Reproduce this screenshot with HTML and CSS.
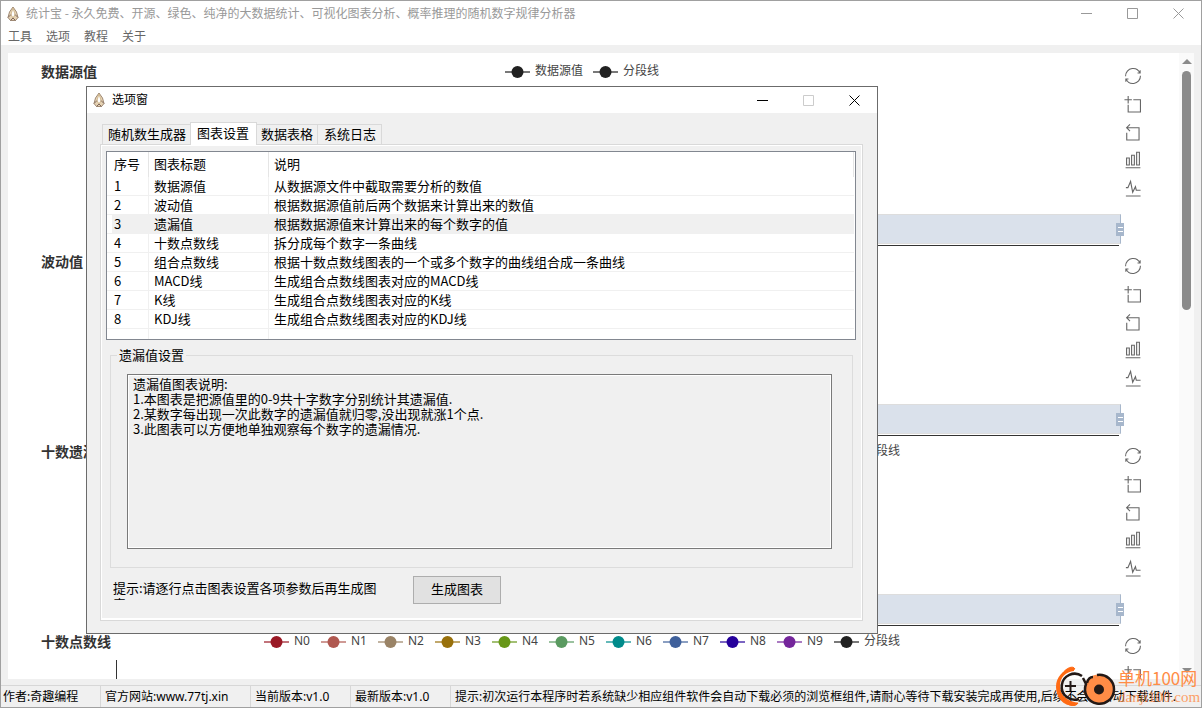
FILE: index.html
```html
<!DOCTYPE html>
<html lang="zh-CN">
<head>
<meta charset="utf-8">
<title>统计宝</title>
<link rel="stylesheet" href="styles.css">
</head>
<body>
<svg class="defs" aria-hidden="true">
  <symbol id="logo" viewBox="0 0 12 16">
    <path d="M6 1L2.500 6L1 11.500L3.500 14.500H8.500L11 11.500L9.500 6Z" fill="#e6d3b4" stroke="#a08a74" stroke-width="1"/>
    <path d="M6 2L4 8.500L6 12L8 8.500Z" fill="#fff" stroke="#c9ad80" stroke-width=".8"/>
    <path d="M1 11.500L4 8.500M11 11.500L8 8.500M3.500 14.500L6 12L8.500 14.500" fill="none" stroke="#7d655c" stroke-width="1"/>
  </symbol>
  <symbol id="restore" viewBox="0 0 60 60"><path d="M47,18.900h9.800V8.700M56.300,20.100C52.100,9,40.500,0.600,26.800,2.100C12.600,3.700,1.600,16.200,2.100,30.600M13,41.100H3.100v10.200M3.700,39.900c4.200,11.100,15.800,19.500,29.500,18c14.200-1.600,25.200-14.100,24.700-28.500"/></symbol>
  <symbol id="zoom" viewBox="2 0 58 58"><path d="M0,13.500h26.900M13.500,26.900V0M32.100,13.500H58V58H13.500V32.100"/></symbol>
  <symbol id="back" viewBox="4 0 58 58"><path d="M22,1.400L9.900,13.500l12.300,12.300M10.300,13.500H54.900v44.600H10.300v-26"/></symbol>
  <symbol id="bar" viewBox="1 1 58 58"><path d="M6.700,22.900h10V48h-10V22.900zM24.900,13h10v35h-10V13zM43.200,2h10v46h-10V2zM3.100,58h53.700"/></symbol>
  <symbol id="line" viewBox="1 2 56 56"><path d="M4.100,28.900h7.100l9.300-22l7.400,38l9.700-19.700l3,12.800h14.900M4.100,58h51.400"/></symbol>
  <symbol id="key" viewBox="0 0 25 14"><path d="M0 7H25" stroke="currentColor" stroke-width="2" opacity=".6"/><circle cx="12.500" cy="7" r="6" fill="currentColor"/></symbol>
  <symbol id="min" viewBox="0 0 11 11"><path d="M0 5.500H11" fill="none" stroke="currentColor"/></symbol>
  <symbol id="max" viewBox="0 0 11 11"><path d="M.5 .5H10.500V10.500H.5Z" fill="none" stroke="currentColor"/></symbol>
  <symbol id="close" viewBox="0 0 11 11"><path d="M.5 .5L10.500 10.500M10.500 .5L.5 10.500" fill="none" stroke="currentColor"/></symbol>
</svg>

<div class="window">
  <header class="titlebar main-title">
    <svg class="logo"><use href="#logo"/></svg>
    <h1 class="caption">统计宝 - 永久免费、开源、绿色、纯净的大数据统计、可视化图表分析、概率推理的随机数字规律分析器</h1>
    <div class="controls">
      <button type="button" aria-label="最小化"><svg><use href="#min"/></svg></button>
      <button type="button" aria-label="最大化"><svg><use href="#max"/></svg></button>
      <button type="button" aria-label="关闭"><svg><use href="#close"/></svg></button>
    </div>
  </header>
  <nav class="menubar">
    <button type="button">工具</button>
    <button type="button">选项</button>
    <button type="button">教程</button>
    <button type="button">关于</button>
  </nav>

  <main class="workspace">
    <div class="charts">
      <section class="chart">
        <div class="chart-head">
          <h2>数据源值</h2>
          <ul class="legend">
            <li class="ink"><svg><use href="#key"/></svg><span>数据源值</span></li>
            <li class="ink"><svg><use href="#key"/></svg><span>分段线</span></li>
          </ul>
        </div>
        <div class="plot"><div class="slider"><i class="grip"></i></div></div>
        <div class="toolbox">
          <button type="button" aria-label="还原"><svg><use href="#restore"/></svg></button>
          <button type="button" aria-label="区域缩放"><svg><use href="#zoom"/></svg></button>
          <button type="button" aria-label="缩放还原"><svg><use href="#back"/></svg></button>
          <button type="button" aria-label="柱状图"><svg><use href="#bar"/></svg></button>
          <button type="button" aria-label="折线图"><svg><use href="#line"/></svg></button>
        </div>
      </section>
      <section class="chart">
        <div class="chart-head">
          <h2>波动值</h2>
        </div>
        <div class="plot"><div class="slider"><i class="grip"></i></div></div>
        <div class="toolbox">
          <button type="button" aria-label="还原"><svg><use href="#restore"/></svg></button>
          <button type="button" aria-label="区域缩放"><svg><use href="#zoom"/></svg></button>
          <button type="button" aria-label="缩放还原"><svg><use href="#back"/></svg></button>
          <button type="button" aria-label="柱状图"><svg><use href="#bar"/></svg></button>
          <button type="button" aria-label="折线图"><svg><use href="#line"/></svg></button>
        </div>
      </section>
      <section class="chart">
        <div class="chart-head">
          <h2>十数遗漏</h2>
          <ul class="legend">
            <li class="n0"><svg><use href="#key"/></svg><span>N0</span></li>
            <li class="n1"><svg><use href="#key"/></svg><span>N1</span></li>
            <li class="n2"><svg><use href="#key"/></svg><span>N2</span></li>
            <li class="n3"><svg><use href="#key"/></svg><span>N3</span></li>
            <li class="n4"><svg><use href="#key"/></svg><span>N4</span></li>
            <li class="n5"><svg><use href="#key"/></svg><span>N5</span></li>
            <li class="n6"><svg><use href="#key"/></svg><span>N6</span></li>
            <li class="n7"><svg><use href="#key"/></svg><span>N7</span></li>
            <li class="n8"><svg><use href="#key"/></svg><span>N8</span></li>
            <li class="n9"><svg><use href="#key"/></svg><span>N9</span></li>
            <li class="ink"><svg><use href="#key"/></svg><span>分段线</span></li>
          </ul>
        </div>
        <div class="plot"><div class="slider"><i class="grip"></i></div></div>
        <div class="toolbox">
          <button type="button" aria-label="还原"><svg><use href="#restore"/></svg></button>
          <button type="button" aria-label="区域缩放"><svg><use href="#zoom"/></svg></button>
          <button type="button" aria-label="缩放还原"><svg><use href="#back"/></svg></button>
          <button type="button" aria-label="柱状图"><svg><use href="#bar"/></svg></button>
          <button type="button" aria-label="折线图"><svg><use href="#line"/></svg></button>
        </div>
      </section>
      <section class="chart">
        <div class="chart-head">
          <h2>十数点数线</h2>
          <ul class="legend">
            <li class="n0"><svg><use href="#key"/></svg><span>N0</span></li>
            <li class="n1"><svg><use href="#key"/></svg><span>N1</span></li>
            <li class="n2"><svg><use href="#key"/></svg><span>N2</span></li>
            <li class="n3"><svg><use href="#key"/></svg><span>N3</span></li>
            <li class="n4"><svg><use href="#key"/></svg><span>N4</span></li>
            <li class="n5"><svg><use href="#key"/></svg><span>N5</span></li>
            <li class="n6"><svg><use href="#key"/></svg><span>N6</span></li>
            <li class="n7"><svg><use href="#key"/></svg><span>N7</span></li>
            <li class="n8"><svg><use href="#key"/></svg><span>N8</span></li>
            <li class="n9"><svg><use href="#key"/></svg><span>N9</span></li>
            <li class="ink"><svg><use href="#key"/></svg><span>分段线</span></li>
          </ul>
        </div>
        <div class="plot"></div>
        <div class="toolbox">
          <button type="button" aria-label="还原"><svg><use href="#restore"/></svg></button>
          <button type="button" aria-label="区域缩放"><svg><use href="#zoom"/></svg></button>
        </div>
      </section>
    </div>
    <div class="scrollbar" aria-hidden="true">
      <i class="arrow up"></i>
      <div class="track"><i class="thumb"></i></div>
      <i class="arrow down"></i>
    </div>
  </main>

  <footer class="statusbar">
    <span class="pane short">作者:奇趣编程</span>
    <span class="pane long">官方网站:www.77tj.xin</span>
    <span class="pane short">当前版本:v1.0</span>
    <span class="pane short">最新版本:v1.0</span>
    <span class="pane rest">提示:初次运行本程序时若系统缺少相应组件软件会自动下载必须的浏览框组件,请耐心等待下载安装完成再使用,后续不会再自动下载组件.</span>
  </footer>
</div>

<div class="dialog" role="dialog" aria-labelledby="dialog-title">
  <header class="titlebar">
    <svg class="logo"><use href="#logo"/></svg>
    <h2 class="caption" id="dialog-title">选项窗</h2>
    <div class="controls">
      <button type="button" aria-label="最小化"><svg><use href="#min"/></svg></button>
      <button type="button" aria-label="最大化" disabled><svg><use href="#max"/></svg></button>
      <button type="button" aria-label="关闭"><svg><use href="#close"/></svg></button>
    </div>
  </header>
  <div class="dialog-body">
    <div class="tabs" role="tablist">
      <button type="button" role="tab">随机数生成器</button>
      <button type="button" role="tab" class="active" aria-selected="true">图表设置</button>
      <button type="button" role="tab">数据表格</button>
      <button type="button" role="tab">系统日志</button>
    </div>
    <div class="page" role="tabpanel">
      <div class="listview">
        <table>
          <colgroup><col class="c-no"><col class="c-name"><col></colgroup>
          <thead><tr><th>序号</th><th>图表标题</th><th>说明</th></tr></thead>
          <tbody>
            <tr><td>1</td><td>数据源值</td><td>从数据源文件中截取需要分析的数值</td></tr>
            <tr><td>2</td><td>波动值</td><td>根据数据源值前后两个数据来计算出来的数值</td></tr>
            <tr class="selected"><td>3</td><td>遗漏值</td><td>根据数据源值来计算出来的每个数字的值</td></tr>
            <tr><td>4</td><td>十数点数线</td><td>拆分成每个数字一条曲线</td></tr>
            <tr><td>5</td><td>组合点数线</td><td>根据十数点数线图表的一个或多个数字的曲线组合成一条曲线</td></tr>
            <tr><td>6</td><td>MACD线</td><td>生成组合点数线图表对应的MACD线</td></tr>
            <tr><td>7</td><td>K线</td><td>生成组合点数线图表对应的K线</td></tr>
            <tr><td>8</td><td>KDJ线</td><td>生成组合点数线图表对应的KDJ线</td></tr>
            <tr class="blank"><td></td><td></td><td></td></tr>
          </tbody>
        </table>
      </div>
      <fieldset class="group">
        <legend>遗漏值设置</legend>
        <textarea class="notes" readonly aria-label="遗漏值图表说明">遗漏值图表说明:
1.本图表是把源值里的0-9共十字数字分别统计其遗漏值.
2.某数字每出现一次此数字的遗漏值就归零,没出现就涨1个点.
3.此图表可以方便地单独观察每个数字的遗漏情况.</textarea>
      </fieldset>
      <div class="actions">
        <p class="hint">提示:请逐行点击图表设置各项参数后再生成图表</p>
        <button type="button" class="generate">生成图表</button>
      </div>
    </div>
  </div>
</div>

<div class="stamp">
  <svg class="stamp-logo" viewBox="0 0 62 42">
    <path d="M20 3C9 3 2 11 2 21C2 31 9 40 20 40L24 37C14 35 6 30 6 20C6 11 12 6 20 5Z" fill="#ff6a13"/>
    <path d="M8 8C12 2 19 -1 21 3C18 4 12 5 8 8ZM11 36C15 40 22 41 24 37C20 38 15 37 11 36Z" fill="#ff6a13" stroke="#ff6a13"/>
    <path d="M28 10A13 13 0 1 0 25 33" fill="none" stroke="#231916" stroke-width="2.500"/>
    <path d="M16.500 15V25M11 20H22" stroke="#231916" stroke-width="2"/>
    <circle cx="45" cy="23.500" r="15" fill="#ff8c46"/>
    <path d="M43 9A14.500 14.500 0 1 1 32 18L29 12M33 17C34 13 36 11 39 11" fill="none" stroke="#231916" stroke-width="2.500"/>
    <circle cx="45" cy="23.500" r="5" fill="#231916"/>
  </svg>
  <div class="stamp-text"><span class="stamp-name">单机100网</span><span class="stamp-url">danji100.com</span></div>
</div>
</body>
</html>
```
FILE: styles.css
```css
* { box-sizing: border-box; }

body {
  margin: 0;
  height: 100vh;
  overflow: hidden;
  position: relative;
  font: 12px/16px "Noto Sans CJK SC", "Noto Sans", sans-serif;
  color: #000;
}

h1, h2, p, ul { margin: 0; padding: 0; font-size: inherit; font-weight: 400; }
ul { list-style: none; }
button { margin: 0; padding: 0; border: 0; background: none; font: inherit; color: inherit; }
svg { display: block; }
.defs { position: absolute; width: 0; height: 0; }

.window {
  height: 100%;
  display: flex;
  flex-direction: column;
  background: #f0f0f0;
  border: 1px solid #a0a0a0;
}

/* title bars */
.titlebar { display: flex; align-items: center; height: 26px; padding-left: 6px; background: #fff; }
.main-title { height: 25px; color: #999; }
.logo { width: 12px; height: 16px; flex: none; }
.caption { flex: 1; padding: 0 0 2px 7px; white-space: nowrap; }
.controls { display: flex; align-self: stretch; }
.controls button { width: 46px; display: flex; align-items: center; justify-content: center; }
.controls button:disabled { color: #ccc; }
.controls svg { width: 11px; height: 11px; }

.menubar { display: flex; gap: 14px; height: 19px; padding: 0 7px; background: #fff; color: #666; line-height: 18px; }

/* chart area */
.workspace { flex: 1; min-height: 0; margin: 8px 7px 6px; display: flex; background: #fff; }
.charts { flex: 1; min-width: 0; overflow: hidden; padding-top: 4px; }
.chart {
  display: grid;
  grid-template-columns: 1fr 16px 15px;
  grid-template-rows: 33px 156px;
  height: 190px;
  padding-right: 23px;
}
.chart-head {
  grid-area: 1 / 1 / 2 / 4;
  display: grid;
  grid-template-columns: 1fr auto 1fr;
  align-items: start;
}
.chart-head h2 { padding-left: 33px; font-size: 14px; font-weight: 700; line-height: 28px; color: #333; white-space: nowrap; }
.legend { display: flex; gap: 10px; height: 29px; align-items: center; font-family: "Noto Sans", "Noto Sans CJK SC", sans-serif; }
.legend li { display: flex; align-items: center; gap: 5px; }
.legend svg { width: 25px; height: 14px; }
.legend span { min-width: 17px; color: #444; padding-bottom: 2px; }
.ink { color: #212121; }
.n0 { color: #9a1925; }
.n1 { color: #b05850; }
.n2 { color: #9a8366; }
.n3 { color: #98700b; }
.n4 { color: #679718; }
.n5 { color: #5a9a60; }
.n6 { color: #008b8b; }
.n7 { color: #3f609b; }
.n8 { color: #25009b; }
.n9 { color: #74259b; }

.plot {
  grid-area: 2 / 1 / 3 / 2;
  margin: 0 6px 0 108px;
  border-left: 1px solid #333;
  border-bottom: 1px solid #333;
  display: flex;
  flex-direction: column;
  justify-content: flex-end;
}
.slider {
  height: 30px;
  margin: 0 -2px 1px 0;
  background: #dae1eb;
  border: 1px solid #ddd;
  border-right: 1px solid #a7b7cc;
  display: flex;
  align-items: center;
  justify-content: flex-end;
}
.grip {
  width: 8px;
  height: 13px;
  margin-right: -4px;
  background: linear-gradient(#fff 0 0) center 4px / 5px 1px no-repeat, linear-gradient(#fff 0 0) center 8px / 5px 1px no-repeat, #a7b7cc;
}
.toolbox {
  grid-area: 1 / 2 / 3 / 3;
  display: flex;
  flex-direction: column;
  gap: 12px;
  padding-top: 11px;
}
symbol { overflow: visible; }
.toolbox svg { width: 16px; height: 16px; overflow: visible; fill: none; stroke: #666; stroke-width: 4; }

.scrollbar { width: 15px; background: #fafafa; display: flex; flex-direction: column; align-items: center; padding: 6px 0; }
.arrow { border: 5px solid transparent; border-top-width: 0; border-bottom: 5px solid #8b8b8b; }
.arrow.down { border-bottom-width: 0; border-top: 5px solid #8b8b8b; }
.track { flex: 1; padding-top: 7px; }
.thumb { display: block; width: 9px; height: 40%; border-radius: 5px; background: #8b8b8b; }

/* status bar */
.statusbar { display: flex; height: 22px; border-top: 1px solid #d7d7d7; overflow: hidden; white-space: nowrap; font-family: "Noto Sans", "Noto Sans CJK SC", sans-serif; }
.pane { flex: none; padding-left: 4px; line-height: 21px; border-right: 1px solid #d7d7d7; }
.pane:first-child { padding-left: 2px; }
.short { width: 100px; }
.long { width: 150px; }
.rest { flex: 1; border-right: 0; }

/* options dialog */
.dialog {
  position: absolute;
  left: 86px;
  top: 86px;
  width: 792px;
  border: 1px solid #6b6b6b;
  background: #f0f0f0;
  font-size: 13px;
}
.dialog .caption { font-size: 12px; }
.dialog-body { padding: 9px 14px 12px 13px; }
.tabs { display: flex; align-items: flex-end; height: 22px; padding-left: 2px; }
.tabs button { height: 20px; padding: 0 4px 2px; border: 1px solid #d9d9d9; border-width: 1px 1px 0 0; line-height: 17px; }
.tabs button:first-child { margin-right: -1px; padding-left: 5px; border-left-width: 1px; }
.tabs button:last-child { padding-left: 6px; padding-right: 5px; }
.tabs .active { z-index: 1; height: 23px; margin-bottom: -1px; padding: 0 7px 4px 6px; border-left-width: 1px; background: #fff; }
.page { border: 1px solid #d9d9d9; box-shadow: inset 1px 1px #fff, inset -1px -2px #fff; padding: 6px 6px 16px 5px; }

.listview { border: 1px solid #828790; background: #fff; padding-right: 1px; }
.listview table { width: 100%; border-collapse: separate; border-spacing: 0; table-layout: fixed; }
.c-no { width: 42px; }
.c-name { width: 120px; }
.listview th { height: 25px; padding: 0 5px 2px; text-align: left; font-weight: 400; border-right: 1px solid #e5e5e5; }
.listview td { height: 19px; padding: 0 5px; line-height: 18px; border-right: 1px solid #f0f0f0; border-bottom: 1px solid #f0f0f0; }
.listview th:first-child, .listview td:first-child { padding-left: 7px; }
.listview td:last-child { border-right: 0; }
.listview .selected td { background: #f0f0f0; }
.listview .selected td:first-child { box-shadow: inset 5px 0 #fff; }
.listview .blank td { height: 10px; border-bottom: 0; }

.group { margin: 6px 3px 0 4px; padding: 10px 20px 18px 16px; border: 1px solid #dcdcdc; min-width: 0; }
.group legend { margin-left: -10px; padding: 0 2px; line-height: 18px; }
.notes {
  display: block;
  width: 100%;
  height: 175px;
  margin: 0;
  padding: 1px 5px;
  border: 1px solid #7a7a7a;
  box-shadow: inset 0 0 0 1px #fff;
  background: #f0f0f0;
  color: inherit;
  font: 13px/15px "Noto Sans CJK SC", "Noto Sans", sans-serif;
  resize: none;
  outline: 0;
}
.actions { display: flex; align-items: center; gap: 30px; padding: 8px 0 0 7px; }
.hint { width: 270px; height: 20px; line-height: 16px; overflow: hidden; }
.generate { width: 88px; height: 28px; padding-bottom: 2px; background: #e1e1e1; border: 1px solid #adadad; }

/* corner stamp */
.stamp { position: absolute; right: 0; bottom: 0; display: flex; align-items: center; gap: 2px; color: #ff8c46; pointer-events: none; }
.stamp-logo { width: 62px; height: 42px; }
.stamp-text { display: flex; flex-direction: column; width: 84px; white-space: nowrap; }
.stamp-name { font-size: 17px; line-height: 20px; }
.stamp-url { font: 15px/18px "Liberation Serif", serif; opacity: .8; }
```
